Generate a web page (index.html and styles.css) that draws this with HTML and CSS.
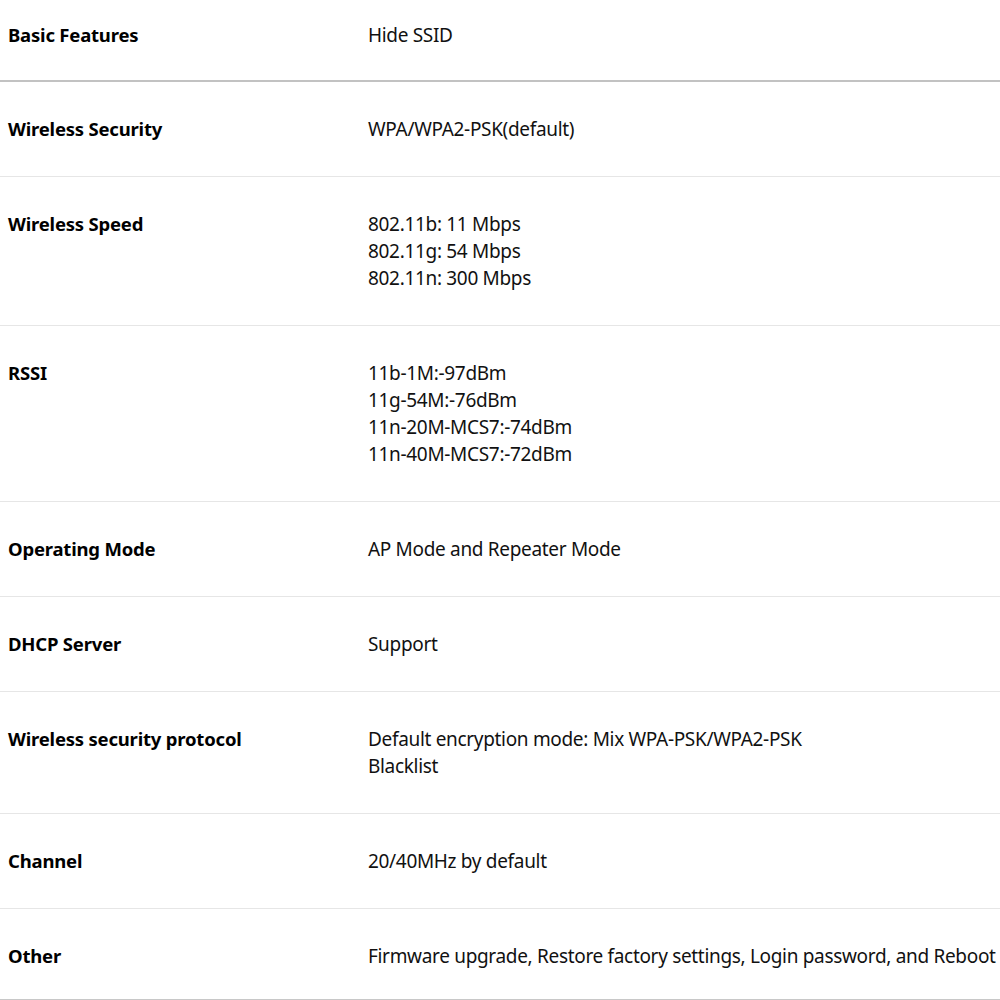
FILE: index.html
```html
<!DOCTYPE html>
<html>
<head>
<meta charset="utf-8">
<link rel="stylesheet" href="styles.css">
</head>
<body>
<table class="spec">
  <tr class="row first"><th>Basic Features</th><td>Hide SSID</td></tr>
  <tr class="row"><th>Wireless Security</th><td>WPA/WPA2-PSK(default)</td></tr>
  <tr class="row"><th>Wireless Speed</th><td>802.11b: 11 Mbps<br>802.11g: 54 Mbps<br>802.11n: 300 Mbps</td></tr>
  <tr class="row"><th>RSSI</th><td>11b-1M:-97dBm<br>11g-54M:-76dBm<br>11n-20M-MCS7:-74dBm<br>11n-40M-MCS7:-72dBm</td></tr>
  <tr class="row"><th>Operating Mode</th><td>AP Mode and Repeater Mode</td></tr>
  <tr class="row"><th>DHCP Server</th><td>Support</td></tr>
  <tr class="row"><th>Wireless security protocol</th><td>Default encryption mode: Mix WPA-PSK/WPA2-PSK<br>Blacklist</td></tr>
  <tr class="row"><th>Channel</th><td>20/40MHz by default</td></tr>
  <tr class="row last"><th>Other</th><td>Firmware upgrade, Restore factory settings, Login password, and Reboot</td></tr>
</table>
</body>
</html>
```
FILE: styles.css
```css
html, body {
  margin: 0;
  padding: 0;
  background: #fff;
}
body {
  font-family: "Noto Sans", "Open Sans", sans-serif;
  font-size: 19px;
  line-height: 27px;
  color: #111;
}
.spec {
  width: 1000px;
  border-collapse: collapse;
}
.spec th, .spec td {
  padding: 34px 0 33px;
  vertical-align: top;
  text-align: left;
  white-space: nowrap;
  border-bottom: 1px solid #e6e6e6;
}
.spec td {
  letter-spacing: -0.32px;
}
.spec th {
  width: 368px;
  padding-left: 8px;
  box-sizing: border-box;
  font-weight: bold;
  font-size: 18.5px;
  line-height: 25px;
  padding-top: 34px;
  padding-bottom: 35px;
  letter-spacing: -0.2px;
  color: #000;
}
.spec .first th, .spec .first td {
  padding-top: 22px;
  padding-bottom: 31px;
  border-bottom: 2px solid #c2c2c2;
}
.spec .first th {
  padding-top: 22px;
  padding-bottom: 33px;
}
.spec .last th, .spec .last td {
  padding-bottom: 28px;
  border-bottom: 3px solid #c8c8c8;
}
.spec .last th {
  padding-bottom: 31px;
}
```
